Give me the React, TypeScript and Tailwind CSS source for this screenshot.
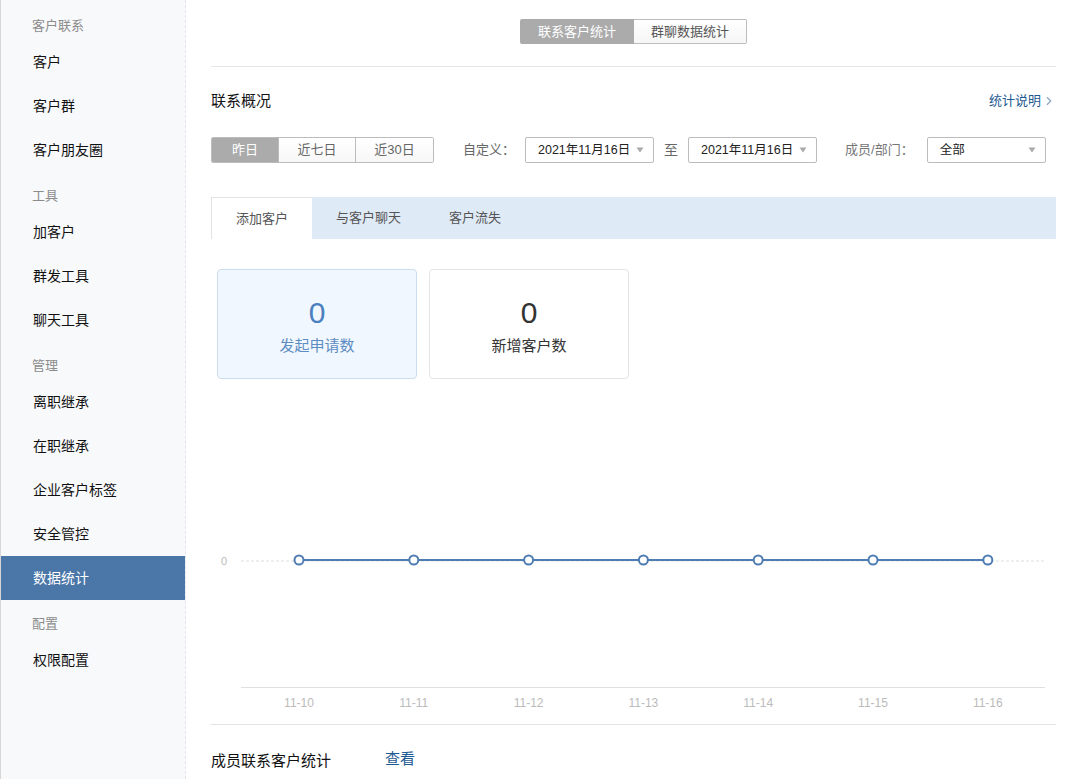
import { ChevronRight } from "lucide-react";

const FONT = { fontFamily: '"Liberation Sans", "Noto Sans CJK SC", sans-serif' };

const sections = [
  { title: "客户联系", items: ["客户", "客户群", "客户朋友圈"] },
  { title: "工具", items: ["加客户", "群发工具", "聊天工具"] },
  { title: "管理", items: ["离职继承", "在职继承", "企业客户标签", "安全管控", "数据统计"] },
  { title: "配置", items: ["权限配置"] },
];

const days = ["11-10", "11-11", "11-12", "11-13", "11-14", "11-15", "11-16"];

function Caret() {
  return (
    <svg width="8" height="6" viewBox="0 0 8 6" className="shrink-0">
      <path d="M0.5 0.5 L7.5 0.5 L4 5.5 Z" fill="#aaa" />
    </svg>
  );
}

function Select({ value, width }: { value: string; width: string }) {
  return (
    <div
      className={`${width} h-[26px] flex items-center justify-between pl-[12px] pr-[9px] border border-[#bcbcbc] rounded-[2px] bg-white text-[12.5px] text-[#222]`}
    >
      <span>{value}</span>
      <Caret />
    </div>
  );
}

function Sidebar() {
  return (
    <aside className="w-[186px] shrink-0 h-full bg-[#f8f9fb] shadow-[inset_1px_0_0_#d6d6d6] border-r border-dashed border-[#e2e5ea] pt-[2px]">
      {sections.map((s) => (
        <div key={s.title}>
          <div className="h-[38px] pt-[16px] pl-[32px] text-[13px] leading-[16px] text-[#8c8c8c]">
            {s.title}
          </div>
          {s.items.map((item) => {
            const active = item === "数据统计";
            return (
              <div
                key={item}
                className={`h-[44px] flex items-center pl-[32px] ml-[1px] text-[14px] ${
                  active ? "bg-[#4a76a8] text-white" : "text-[#111]"
                }`}
              >
                {item}
              </div>
            );
          })}
        </div>
      ))}
    </aside>
  );
}

function Chart() {
  const xs = days.map((_, i) => 88 + i * 114.8);
  return (
    <svg width="845" height="345" viewBox="0 0 845 345" className="block">
      <text x="13" y="186" fontSize="11" fill="#bbb" textAnchor="middle" style={FONT}>
        0
      </text>
      <line x1="30" y1="182" x2="834" y2="182" stroke="#ddd" strokeDasharray="3 2" />
      <line x1="30" y1="308.5" x2="834" y2="308.5" stroke="#e0e0e0" />
      <polyline
        points={xs.map((x) => `${x},181`).join(" ")}
        fill="none"
        stroke="#4f7db3"
        strokeWidth="2"
      />
      {xs.map((x) => (
        <circle key={x} cx={x} cy="181" r="4.5" fill="white" stroke="#4f7db3" strokeWidth="2" />
      ))}
      {days.map((d, i) => (
        <text
          key={d}
          x={xs[i]}
          y="328"
          fontSize="12"
          fill="#bbb"
          textAnchor="middle"
          style={FONT}
        >
          {d}
        </text>
      ))}
    </svg>
  );
}

export default function App() {
  return (
    <div className="flex h-[779px] w-full overflow-hidden bg-white" style={FONT}>
      <Sidebar />
      <main className="flex-1 pl-[25px] pr-[17px]">
        {/* top switch */}
        <div className="h-[67px] pt-[19px] border-b border-[#e6e6e6] flex justify-center">
          <div className="flex h-[25px] text-[13px]">
            <div className="w-[114px] flex items-center justify-center bg-[#ababab] text-white rounded-l-[2px]">
              联系客户统计
            </div>
            <div className="w-[113px] flex items-center justify-center border border-l-0 border-[#bcbcbc] bg-gradient-to-b from-white to-[#f6f6f6] text-[#555] rounded-r-[2px]">
              群聊数据统计
            </div>
          </div>
        </div>

        {/* header */}
        <div className="mt-[24px] h-[20px] flex items-center justify-between">
          <span className="text-[15px] text-[#111]">联系概况</span>
          <span className="flex items-center text-[13px] text-[#1e5a91]">
            统计说明
            <ChevronRight size={14} strokeWidth={2} className="text-[#8ba6c2] ml-[1px]" />
          </span>
        </div>

        {/* filters */}
        <div className="mt-[26px] flex items-center h-[26px] text-[13px]">
          <div className="flex h-[26px] border border-[#bcbcbc] rounded-[2px] overflow-hidden">
            <div className="w-[66px] flex items-center justify-center bg-[#ababab] text-white">昨日</div>
            <div className="w-[77px] flex items-center justify-center border-l border-[#bcbcbc] bg-gradient-to-b from-white to-[#f7f7f7] text-[#666]">
              近七日
            </div>
            <div className="w-[78px] flex items-center justify-center border-l border-[#bcbcbc] bg-gradient-to-b from-white to-[#f7f7f7] text-[#666]">
              近30日
            </div>
          </div>
          <span className="ml-[29px] text-[#666]">自定义：</span>
          <div className="ml-[10px]">
            <Select value="2021年11月16日" width="w-[129px]" />
          </div>
          <span className="ml-[10px] text-[#666] text-[14px]">至</span>
          <div className="ml-[10px]">
            <Select value="2021年11月16日" width="w-[129px]" />
          </div>
          <span className="ml-[28px] text-[#777]">成员/部门：</span>
          <div className="ml-[13px]">
            <Select value="全部" width="w-[119px]" />
          </div>
        </div>

        {/* tabs */}
        <div className="mt-[34px] h-[42px] flex bg-[#dfeaf7] text-[13px]">
          <div className="px-[24px] flex items-center bg-white border-l border-t border-[#e3e3e3] text-[#555]">
            添加客户
          </div>
          <div className="px-[24px] flex items-center text-[#555]">与客户聊天</div>
          <div className="px-[24px] flex items-center text-[#555]">客户流失</div>
        </div>

        {/* cards */}
        <div className="mt-[30px] ml-[6px] flex gap-[12px]">
          <div className="w-[200px] h-[110px] rounded-[4px] border border-[#cbdded] bg-[#f0f7fe] flex flex-col items-center pt-[26px]">
            <span className="text-[30px] leading-[34px] text-[#4a80bf]">0</span>
            <span className="mt-[6px] text-[15px] leading-[20px] text-[#5d8cc2]">发起申请数</span>
          </div>
          <div className="w-[200px] h-[110px] rounded-[4px] border border-[#e2e4e7] bg-white flex flex-col items-center pt-[26px]">
            <span className="text-[30px] leading-[34px] text-[#333]">0</span>
            <span className="mt-[6px] text-[15px] leading-[20px] text-[#333]">新增客户数</span>
          </div>
        </div>

        {/* chart */}
        <Chart />

        {/* member stats */}
        <div className="border-t border-[#e3e3e3] pt-[25px] flex items-center text-[15px]">
          <span className="w-[174px] text-[#111]">成员联系客户统计</span>
          <span className="text-[#1e5a91] -mt-[4px]">查看</span>
        </div>
      </main>
    </div>
  );
}
